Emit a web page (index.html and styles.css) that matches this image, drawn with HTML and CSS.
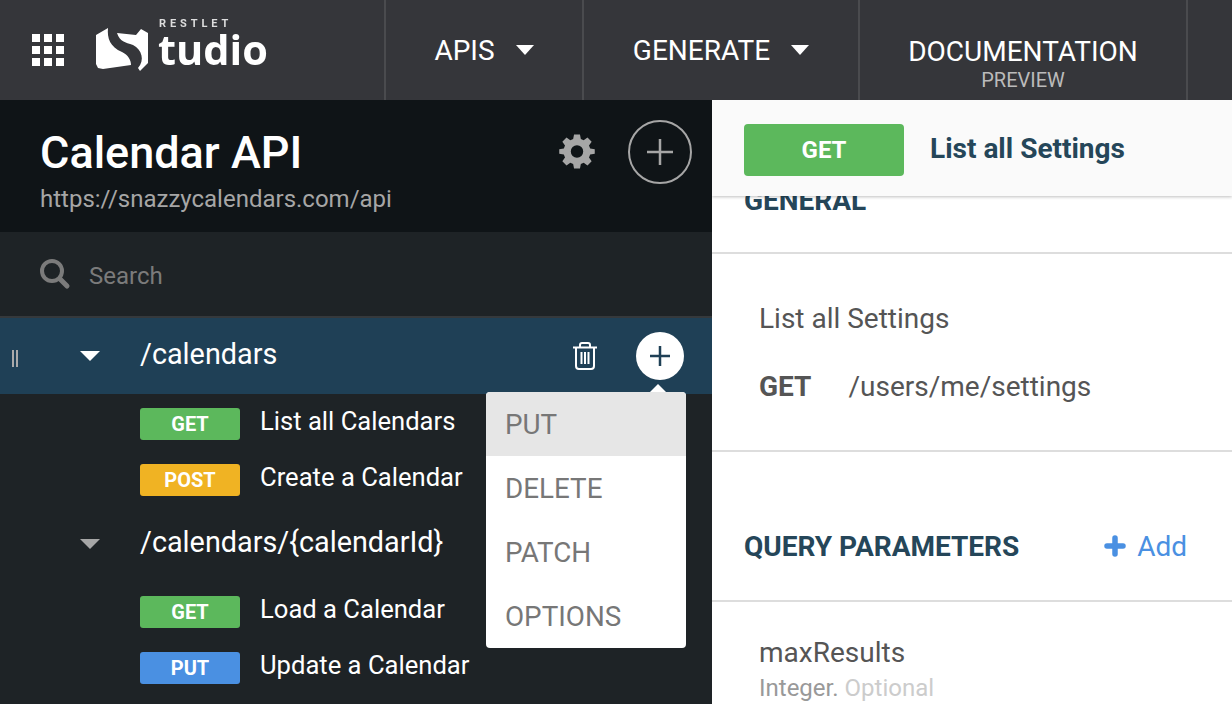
FILE: index.html
```html
<!DOCTYPE html>
<html lang="en">
<head>
	<meta charset="UTF-8">
	<title>Restlet Studio</title>
	<link rel="stylesheet" href="styles.css">
</head>
<body>
	<header class="topbar">
		<div class="brand">
			<div class="apps">
				<i></i><i></i><i></i><i></i><i></i><i></i><i></i><i></i><i></i>
			</div>
			<div class="logo">
				<svg class="logo-mark" width="52" height="43" viewBox="0 0 52 43">
					<path fill="#fff" d="M12 0C11 10 14 19 26 24C32 27 35 32 35 37L7 41L2 40L0 36L0 7Z"/>
					<path fill="#fff" d="M21 5L40 7L45 1L52 5V35L44 43L42 40C49 32 46 22 37 17C29 14 24 14 21 5Z"/>
				</svg>
				<div class="logo-text">
					<span class="logo-small">RESTLET</span>
					<span class="logo-big">tudio</span>
				</div>
			</div>
		</div>
		<nav class="nav">
			<a class="nav-item nav-apis">APIS <span class="caret"></span></a>
			<a class="nav-item nav-generate">GENERATE <span class="caret"></span></a>
			<a class="nav-item nav-docs">
				<span>DOCUMENTATION</span>
				<small>PREVIEW</small>
			</a>
		</nav>
	</header>

	<div class="main">
		<aside class="sidebar">
			<div class="api-head">
				<div class="api-title">
					<h1>Calendar API</h1>
					<div class="api-url">https://snazzycalendars.com/api</div>
				</div>
				<svg class="gear" width="36" height="37" viewBox="0 0 24 25">
					<path fill="#a6a6a6" fill-rule="evenodd" d="M10 1h4l.6 3.1 1.9.8L19.100 3.100l2.800 2.800-1.800 2.600.8 1.900L24 11v3l-3.100.6-.8 1.900 1.800 2.600-2.800 2.800-2.600-1.800-1.900.8L14 24h-4l-.6-3.100-1.900-.8-2.600 1.800-2.800-2.800 1.800-2.600-.8-1.900L0 14v-3l3.100-.6.8-1.900L2.100 5.900l2.800-2.800 2.600 1.800 1.900-.8zM12 8.300a4.200 4.200 0 1 0 0 8.400 4.200 4.200 0 0 0 0-8.400z"/>
				</svg>
				<div class="add-circle">
					<svg width="28" height="28" viewBox="0 0 28 28"><path stroke="#a6a6a6" stroke-width="2.500" d="M14 1v26M1 14h26"/></svg>
				</div>
			</div>

			<div class="search">
				<svg width="32" height="32" viewBox="0 0 32 32" fill="none" stroke="#7b7b7b">
					<circle cx="13" cy="13" r="10" stroke-width="4"/>
					<path stroke-width="5" stroke-linecap="round" d="M21 21l7 7"/>
				</svg>
				<span>Search</span>
			</div>

			<div class="resource active">
				<span class="grip"></span>
				<span class="tri"></span>
				<span class="path">/calendars</span>
				<svg class="trash" width="26" height="28" viewBox="0 0 26 28" fill="none" stroke="#fff" stroke-width="2">
					<path d="M1 5.500h24M8 5V3q0-2 2-2h6q2 0 2 2v2M4 6v18q0 3 3 3h12q3 0 3-3V6M9.500 10v12M13 10v12M16.500 10v12"/>
				</svg>
				<div class="add-white">
					<svg width="20" height="20" viewBox="0 0 20 20"><path stroke="#1f4056" stroke-width="2.500" d="M10 0v20M0 10h20"/></svg>
				</div>
			</div>

			<ul class="methods">
				<li><span class="badge get">GET</span><span class="label">List all Calendars</span></li>
				<li><span class="badge post">POST</span><span class="label">Create a Calendar</span></li>
			</ul>

			<div class="resource sub">
				<span class="grip"></span>
				<span class="tri tri-grey"></span>
				<span class="path">/calendars/{calendarId}</span>
			</div>

			<ul class="methods">
				<li><span class="badge get">GET</span><span class="label">Load a Calendar</span></li>
				<li><span class="badge put">PUT</span><span class="label">Update a Calendar</span></li>
			</ul>

			<div class="menu">
				<div class="menu-item selected">PUT</div>
				<div class="menu-item">DELETE</div>
				<div class="menu-item">PATCH</div>
				<div class="menu-item">OPTIONS</div>
			</div>
		</aside>

		<section class="content">
			<div class="op-head">
				<span class="op-badge">GET</span>
				<span class="op-title">List all Settings</span>
			</div>
			<div class="scroll">
				<h2 class="general">GENERAL</h2>
				<div class="block">
					<div class="summary">List all Settings</div>
					<div class="route"><b>GET</b><span>/users/me/settings</span></div>
				</div>
				<div class="query">
					<h2>QUERY PARAMETERS</h2>
					<a class="add"><svg width="22" height="22" viewBox="0 0 22 22"><path stroke="#4a90e2" stroke-width="5.500" stroke-linecap="round" d="M11 3v16M3 11h16"/></svg>Add</a>
				</div>
				<div class="param">
					<div class="param-name">maxResults</div>
					<div class="param-type">Integer. <em>Optional</em></div>
				</div>
			</div>
		</section>
	</div>
</body>
</html>
```

FILE: styles.css
```css
html, body {
	height: 100%;
	margin: 0;
	padding: 0;
	overflow: hidden;
}
body {
	font-family: Roboto, "Liberation Sans", sans-serif;
	background: #fff;
}

/* top bar */
.topbar {
	display: flex;
	height: 100px;
	background: #35363a;
	color: #fff;
}
.brand {
	display: flex;
	align-items: center;
	width: 384px;
	padding-left: 32px;
	box-sizing: border-box;
}
.apps {
	display: grid;
	grid-template-columns: repeat(3, 8px);
	gap: 4px;
	margin-right: 32px;
}
.apps i {
	width: 8px;
	height: 8px;
	background: #fff;
}
.logo {
	display: flex;
	align-items: flex-end;
	margin-top: -12px;
	filter: blur(.5px);
}
.logo-text {
	display: flex;
	flex-direction: column;
	margin-left: 10px;
}
.logo-small {
	font-size: 11px;
	font-weight: 700;
	letter-spacing: 3.9px;
	line-height: 10px;
	margin: 2px 0 -2px 1px;
	color: #ddd;
}
.logo-big {
	font-family: "Open Sans", sans-serif;
	font-size: 41.500px;
	font-weight: 700;
	line-height: 44px;
}
.nav {
	display: flex;
}
.nav-item {
	display: flex;
	align-items: center;
	justify-content: center;
	box-sizing: border-box;
	border-left: 2px solid #4a4b4e;
	font-size: 28px;
}
.nav-apis {
	width: 198px;
	gap: 21px;
}
.nav-generate {
	width: 276px;
	gap: 21px;
}
.nav-docs {
	width: 330px;
	flex-direction: column;
	border-right: 2px solid #4a4b4e;
	padding-top: 26px;
}
.nav-docs small {
	font-size: 20px;
	color: #bbb;
	line-height: 24px;
}
.caret {
	border-left: 9px solid transparent;
	border-right: 9px solid transparent;
	border-top: 10px solid #fff;
}

/* left column */
.main {
	display: flex;
	height: 604px;
}
.sidebar {
	position: relative;
	width: 712px;
	background: #1e2326;
	color: #fff;
}
.api-head {
	display: flex;
	align-items: center;
	height: 132px;
	padding: 0 20px 0 40px;
	box-sizing: border-box;
	background: #0f1417;
}
.api-title {
	flex: 1;
	padding-top: 7px;
}
.api-head h1 {
	margin: 0;
	font-size: 45px;
	font-weight: 500;
	line-height: 52px;
}
.api-url {
	margin-top: 6px;
	font-size: 24px;
	color: #a6a6a6;
}
.gear {
	margin-right: 33px;
	margin-bottom: 30px;
}
.add-circle {
	display: flex;
	align-items: center;
	justify-content: center;
	width: 60px;
	height: 60px;
	border: 2px solid #a6a6a6;
	border-radius: 50%;
	margin-bottom: 28px;
}
.search {
	display: flex;
	align-items: center;
	gap: 18px;
	height: 84px;
	padding-left: 39px;
	font-size: 24px;
	color: #7b7b7b;
}
.search span {
	margin-top: 3px;
}
.resource {
	display: flex;
	align-items: center;
	height: 68px;
	padding-right: 28px;
	font-size: 28.800px;
}
.resource.active {
	height: 78px;
	background: #1f4056;
	box-sizing: border-box;
	border-top: 2px solid #35393c;
}
.resource.sub {
	height: 72px;
	margin-bottom: 2px;
}
.grip {
	width: 6px;
	height: 17px;
	margin-left: 12px;
	margin-top: 4px;
	box-sizing: border-box;
}
.active .grip {
	border-left: 2px solid #aaa;
	border-right: 2px solid #aaa;
}
.tri {
	margin-left: 62px;
	border-left: 10px solid transparent;
	border-right: 10px solid transparent;
	border-top: 10px solid #fff;
}
.tri-grey {
	border-top-color: #a6a6a6;
}
.path {
	flex: 1;
	margin-left: 40px;
	margin-bottom: 4px;
}
.trash {
	margin-right: 38px;
}
.add-white {
	display: flex;
	align-items: center;
	justify-content: center;
	width: 48px;
	height: 48px;
	border-radius: 50%;
	background: #fff;
}
.methods {
	margin: 0;
	padding: 2px 0 0 140px;
	list-style: none;
}
.methods li {
	display: flex;
	align-items: center;
	height: 56px;
	font-size: 25.600px;
}
.label {
	margin-bottom: 6px;
}
.badge {
	width: 100px;
	height: 32px;
	margin-right: 20px;
	border-radius: 3px;
	font-size: 20px;
	font-weight: 700;
	line-height: 32px;
	text-align: center;
}
.get { background: #5cb85c; }
.post { background: #f0b323; }
.put { background: #4a90e2; }

/* method picker */
.menu {
	position: absolute;
	left: 486px;
	top: 292px;
	width: 200px;
	background: #fff;
	border-radius: 4px;
}
.menu:before {
	content: "";
	position: absolute;
	left: 164px;
	top: -8px;
	border-left: 8px solid transparent;
	border-right: 8px solid transparent;
	border-bottom: 8px solid #fff;
}
.menu-item {
	height: 64px;
	padding-left: 19px;
	font-size: 27.800px;
	line-height: 66px;
	color: #777;
}
.menu-item.selected {
	background: #e6e6e6;
	border-radius: 4px 4px 0 0;
}

/* right column */
.content {
	flex: 1;
	overflow: hidden;
	background: #fff;
	color: #555;
}
.op-head {
	position: relative;
	display: flex;
	align-items: center;
	height: 96px;
	padding: 4px 0 0 32px;
	box-sizing: border-box;
	background: #fafafa;
	box-shadow: 0 1px 3px rgba(0,0,0,.25);
}
.op-badge {
	width: 160px;
	height: 52px;
	border-radius: 4px;
	background: #5cb85c;
	color: #fff;
	font-size: 24px;
	font-weight: 700;
	line-height: 52px;
	text-align: center;
}
.op-title {
	margin-left: 26px;
	margin-bottom: 3px;
	font-size: 28px;
	font-weight: 700;
	color: #254659;
}
.scroll h2 {
	margin: 0;
	font-size: 28px;
	font-weight: 700;
	color: #254659;
}
.scroll .general {
	height: 66px;
	margin-top: -10px;
	padding-left: 32px;
	line-height: 30px;
	border-bottom: 2px solid #ddd;
}
.block {
	height: 198px;
	padding: 48px 0 0 47px;
	box-sizing: border-box;
	border-bottom: 2px solid #ddd;
	font-size: 28px;
}
.route {
	margin-top: 35px;
}
.route b {
	font-weight: 700;
	margin-right: 37px;
}
.query {
	display: flex;
	align-items: center;
	justify-content: space-between;
	height: 150px;
	padding: 40px 45px 0 32px;
	box-sizing: border-box;
	border-bottom: 2px solid #ddd;
}
.add {
	display: flex;
	align-items: center;
	gap: 11px;
	font-size: 28px;
	color: #4a90e2;
}
.param {
	padding: 34px 0 0 47px;
}
.param-name {
	font-size: 28px;
}
.param-type {
	margin-top: 5px;
	font-size: 24px;
	color: #999;
}
.param-type em {
	font-style: normal;
	color: #ccc;
}
```
